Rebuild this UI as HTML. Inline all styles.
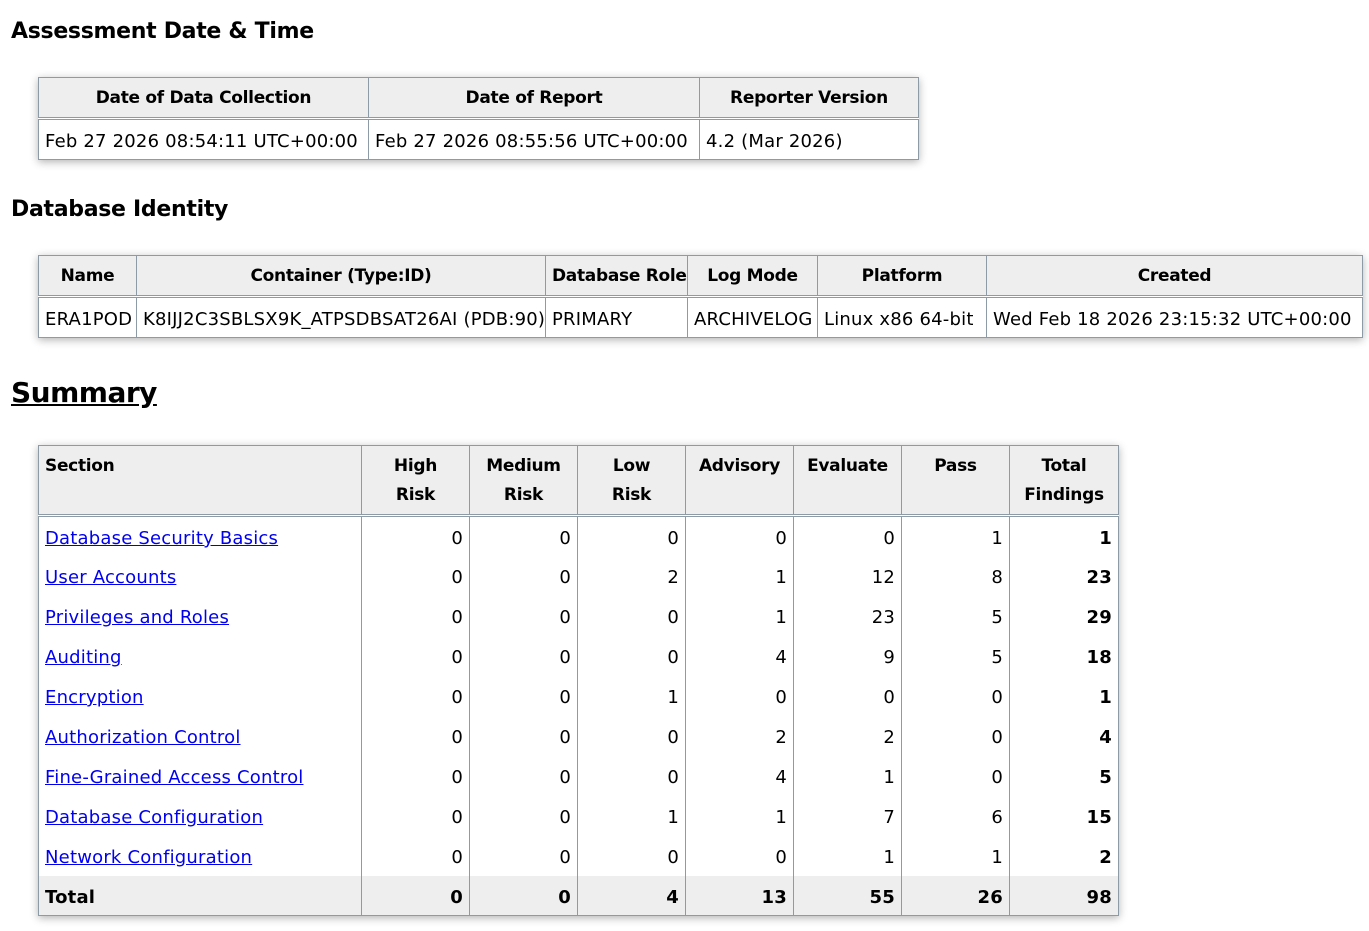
<!DOCTYPE html>
<html><head><meta charset="utf-8"><style>
body{margin:0;background:#fff;font-family:"DejaVu Sans","Liberation Sans",sans-serif;color:#000;width:1369px;height:931px;overflow:hidden;position:relative}
h2{position:absolute;left:11px;margin:0;font-size:22px;font-weight:bold;letter-spacing:-0.3px}
h1{position:absolute;left:11px;margin:0;font-size:28px;font-weight:bold;text-decoration:underline;letter-spacing:-0.5px}
table{position:absolute;border-collapse:collapse;table-layout:fixed;box-shadow:0 2px 8px rgba(0,0,0,.3);font-size:18px;border:1px solid #8c9ba6}
td,th{border:1px solid #8c9ba6;padding:0 6px;white-space:nowrap;overflow:hidden;letter-spacing:0.2px}
td{padding-top:3px}
th{background:#eee;font-weight:bold;font-size:17px;letter-spacing:-0.3px;padding-top:1px}
thead tr{border-bottom:3px double #8c9ba6}
.s td{text-align:right;border-top:none;border-bottom:none;padding-top:4px}
.s td:first-child{text-align:left}
.s th{vertical-align:top;padding-top:6px;line-height:29px;text-align:center}
.s th:first-child{text-align:left}
.s td:last-child{font-weight:bold}
a{color:#00e;text-decoration:underline}
.tot td{background:#eee;font-weight:bold}
</style></head><body>
<h2 style="top:19px">Assessment Date &amp; Time</h2>
<table style="left:38px;top:77px;width:880px">
<colgroup><col style="width:330px"><col style="width:331px"><col style="width:219px"></colgroup>
<thead><tr style="height:41px"><th>Date of Data Collection</th><th>Date of Report</th><th>Reporter Version</th></tr></thead>
<tbody><tr style="height:41px"><td>Feb 27 2026 08:54:11 UTC+00:00</td><td>Feb 27 2026 08:55:56 UTC+00:00</td><td>4.2 (Mar 2026)</td></tr></tbody>
</table>
<h2 style="top:197px">Database Identity</h2>
<table style="left:38px;top:255px;width:1324px">
<colgroup><col style="width:98px"><col style="width:409px"><col style="width:142px"><col style="width:130px"><col style="width:169px"><col style="width:376px"></colgroup>
<thead><tr style="height:41px"><th>Name</th><th>Container (Type:ID)</th><th>Database Role</th><th>Log Mode</th><th>Platform</th><th>Created</th></tr></thead>
<tbody><tr style="height:41px"><td>ERA1POD</td><td>K8IJJ2C3SBLSX9K_ATPSDBSAT26AI (PDB:90)</td><td>PRIMARY</td><td>ARCHIVELOG</td><td>Linux x86 64-bit</td><td>Wed Feb 18 2026 23:15:32 UTC+00:00</td></tr></tbody>
</table>
<h1 style="top:376px">Summary</h1>
<table class="s" style="left:38px;top:445px;width:1080px">
<colgroup><col style="width:323px"><col style="width:108px"><col style="width:108px"><col style="width:108px"><col style="width:108px"><col style="width:108px"><col style="width:108px"><col style="width:109px"></colgroup>
<thead><tr style="height:70px"><th>Section</th><th>High<br>Risk</th><th>Medium<br>Risk</th><th>Low<br>Risk</th><th>Advisory</th><th>Evaluate</th><th>Pass</th><th>Total<br>Findings</th></tr></thead>
<tbody>
<tr style="height:40px"><td><a>Database Security Basics</a></td><td>0</td><td>0</td><td>0</td><td>0</td><td>0</td><td>1</td><td>1</td></tr>
<tr style="height:40px"><td><a>User Accounts</a></td><td>0</td><td>0</td><td>2</td><td>1</td><td>12</td><td>8</td><td>23</td></tr>
<tr style="height:40px"><td><a>Privileges and Roles</a></td><td>0</td><td>0</td><td>0</td><td>1</td><td>23</td><td>5</td><td>29</td></tr>
<tr style="height:40px"><td><a>Auditing</a></td><td>0</td><td>0</td><td>0</td><td>4</td><td>9</td><td>5</td><td>18</td></tr>
<tr style="height:40px"><td><a>Encryption</a></td><td>0</td><td>0</td><td>1</td><td>0</td><td>0</td><td>0</td><td>1</td></tr>
<tr style="height:40px"><td><a>Authorization Control</a></td><td>0</td><td>0</td><td>0</td><td>2</td><td>2</td><td>0</td><td>4</td></tr>
<tr style="height:40px"><td><a>Fine-Grained Access Control</a></td><td>0</td><td>0</td><td>0</td><td>4</td><td>1</td><td>0</td><td>5</td></tr>
<tr style="height:40px"><td><a>Database Configuration</a></td><td>0</td><td>0</td><td>1</td><td>1</td><td>7</td><td>6</td><td>15</td></tr>
<tr style="height:40px"><td><a>Network Configuration</a></td><td>0</td><td>0</td><td>0</td><td>0</td><td>1</td><td>1</td><td>2</td></tr>
<tr class="tot" style="height:40px"><td>Total</td><td>0</td><td>0</td><td>4</td><td>13</td><td>55</td><td>26</td><td>98</td></tr>
</tbody></table>
</body></html>
